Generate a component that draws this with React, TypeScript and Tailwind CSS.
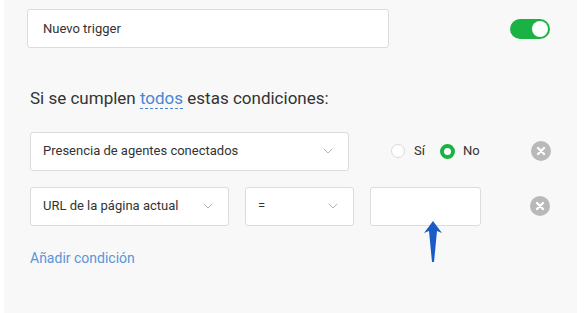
import { ChevronDown } from "lucide-react";

const Chevron = () => (
  <ChevronDown className="h-4 w-4 text-gray-400" strokeWidth={1.2} />
);

const CloseBtn = () => (
  <div className="flex h-[20px] w-[20px] items-center justify-center rounded-full bg-[#b9b9b9]">
    <svg width="10" height="10" viewBox="0 0 10 10">
      <path d="M2 2l6 6M8 2l-6 6" stroke="#fff" strokeWidth="2.4" strokeLinecap="round" />
    </svg>
  </div>
);

export default function App() {
  return (
    <div className="h-[313px] w-[586px] bg-white font-['Roboto',sans-serif]">
      <div className="ml-[4px] h-[313px] w-[573px] bg-[#f8f8f9]">
        {/* name + toggle */}
        <div className="flex items-center pt-[9px] pl-[23px]">
          <div className="flex h-[39px] w-[362px] items-center rounded-[3px] border border-[#dcdcdc] bg-white pl-[15px] text-[13px] text-[#333]">
            Nuevo trigger
          </div>
          <div className="ml-[121px] flex h-[20px] w-[40px] items-center justify-end rounded-full bg-[#1bb245] pr-[2px]">
            <div className="h-[16px] w-[16px] rounded-full bg-white" />
          </div>
        </div>

        <p className="mt-[38px] pl-[26px] text-[17px] text-[#333]">
          Si se cumplen{" "}
          <span className="border-b border-dashed border-[#4a86d4] text-[#4a86d4]">todos</span>{" "}
          estas condiciones:
        </p>

        {/* condition 1 */}
        <div className="mt-[20px] flex items-center pl-[26px]">
          <div className="flex h-[39px] w-[319px] items-center justify-between rounded-[3px] border border-[#dcdcdc] bg-white pl-[12px] pr-[12px] text-[13px] text-[#333]">
            Presencia de agentes conectados
            <Chevron />
          </div>
          <div className="ml-[42px] flex items-center text-[13px] text-[#333]">
            <span className="h-[14px] w-[14px] rounded-full border border-[#d9d9d9] bg-white" />
            <span className="ml-[9px]">Sí</span>
            <span className="ml-[15px] h-[15px] w-[15px] rounded-full border-[4px] border-[#1bb245] bg-white" />
            <span className="ml-[8px]">No</span>
          </div>
          <div className="ml-[51px]">
            <CloseBtn />
          </div>
        </div>

        {/* condition 2 */}
        <div className="mt-[16px] flex items-center pl-[26px]">
          <div className="flex h-[39px] w-[199px] items-center justify-between rounded-[3px] border border-[#dcdcdc] bg-white pl-[12px] pr-[12px] text-[13px] text-[#333]">
            URL de la página actual
            <Chevron />
          </div>
          <div className="ml-[16px] flex h-[39px] w-[109px] items-center justify-between rounded-[3px] border border-[#dcdcdc] bg-white pl-[12px] pr-[12px] text-[13px] text-[#333]">
            =
            <Chevron />
          </div>
          <div className="relative ml-[16px] h-[39px] w-[111px] rounded-[3px] border border-[#dcdcdc] bg-white">
            <svg
              className="absolute left-[52px] top-[33px]"
              width="20"
              height="42"
              viewBox="0 0 20 42"
            >
              <path
                d="M10 0 L19 12 L14 10 L11 41 L9 41 L6 10 L1 12 Z"
                fill="#1a5bc4"
              />
            </svg>
          </div>
          <div className="ml-[49px]">
            <CloseBtn />
          </div>
        </div>

        <p className="mt-[22px] pl-[26px] text-[14px] text-[#5a94d8]">Añadir condición</p>
      </div>
    </div>
  );
}
